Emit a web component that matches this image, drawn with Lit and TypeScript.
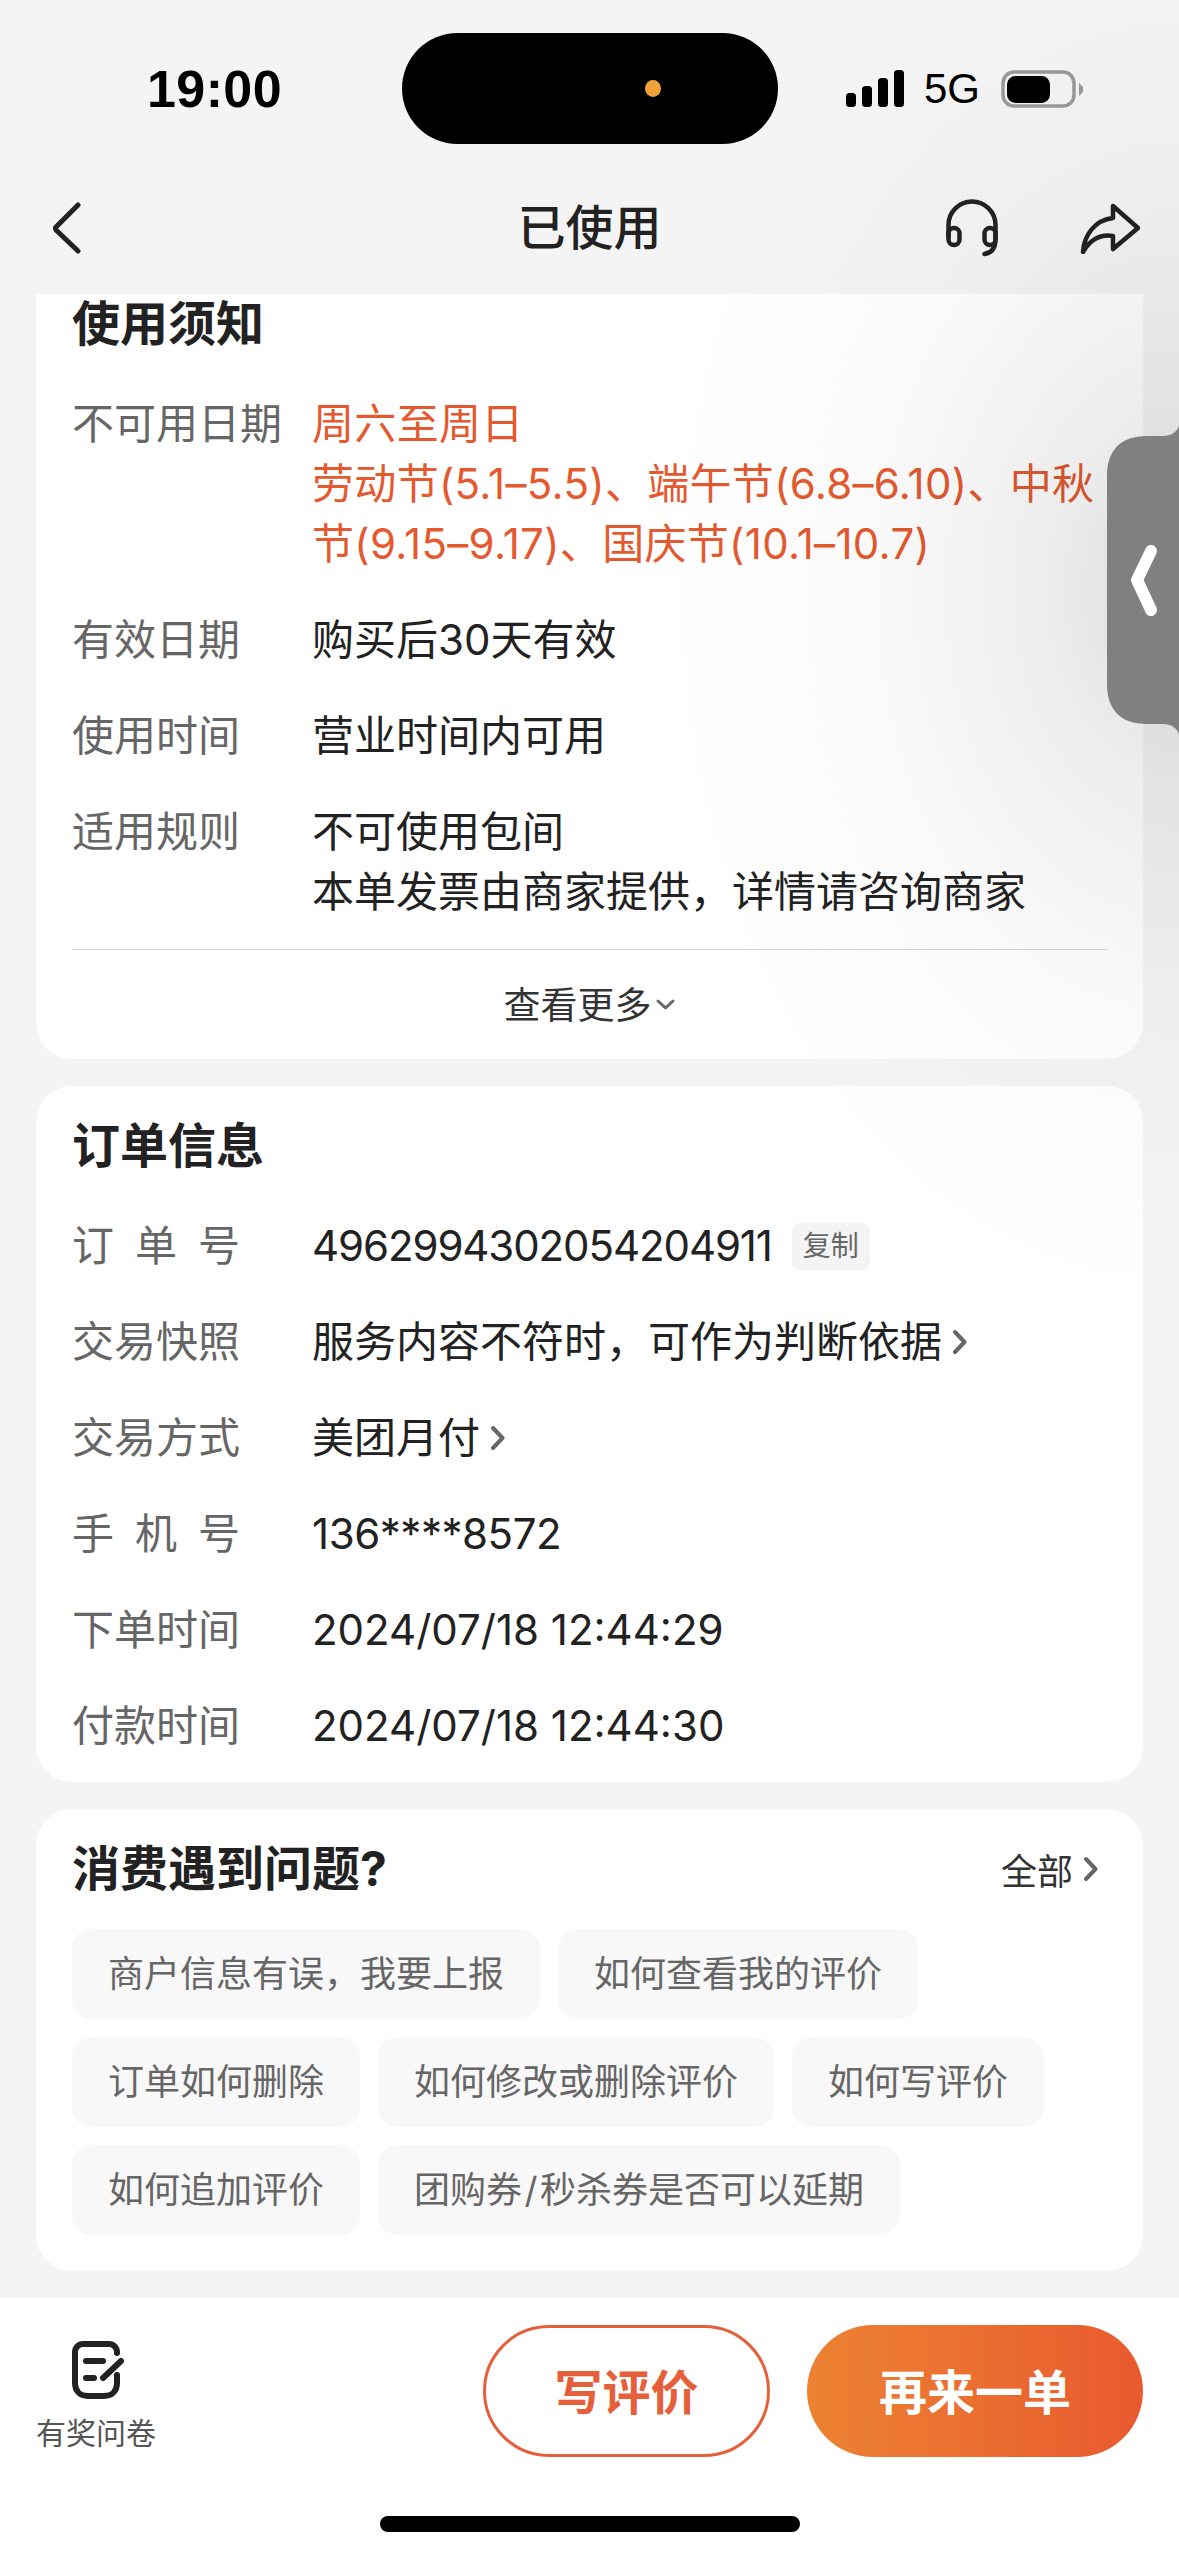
import { LitElement, html, css, svg } from 'lit';
import { customElement } from 'lit/decorators.js';

const chevron = (cls = 'chev') => html`
  <svg class=${cls} viewBox="0 0 15 26" fill="none" stroke="currentColor" stroke-width="4" stroke-linecap="round" stroke-linejoin="round">
    <path d="M3 3 L12.5 13 L3 23"></path>
  </svg>
`;

const label = (text: string, spread = false) =>
  html`<div class="label ${spread ? 'spread' : ''}">${text}</div>`;

const headset = svg`
  <path d="M2.5 38 V26 a23.5 23.5 0 0 1 47 0 V40 c0 9 -4 14 -11 15"></path>
  <rect x="2.5" y="29" width="11" height="17" rx="5.5"></rect>
  <rect x="38.5" y="29" width="11" height="17" rx="5.5"></rect>
`;

const chips = [
  ['商户信息有误，我要上报', '如何查看我的评价'],
  ['订单如何删除', '如何修改或删除评价', '如何写评价'],
  ['如何追加评价', '团购券/秒杀券是否可以延期'],
];

// the slash sits a little wider in the reference
const chipText = (c: string) => {
  const parts = c.split('/');
  return parts.length > 1 ? html`${parts[0]}<span class="slash">/</span>${parts[1]}` : c;
};

@customElement('app-root')
export class AppRoot extends LitElement {
  static override styles = css`
    :host {
      display: block;
      width: 1179px;
      height: 2556px;
      font-family: Inter, 'Noto Sans CJK SC', sans-serif;
      color: #222;
    }
    .page {
      position: relative;
      display: flex;
      flex-direction: column;
      height: 2556px;
      overflow: hidden;
      background: #f4f4f4;
    }
    .shade {
      position: absolute;
      inset: 0;
      pointer-events: none;
      background: radial-gradient(
        ellipse 520px 720px at 1179px 590px,
        rgba(0, 0, 0, 0.14),
        rgba(0, 0, 0, 0.12) 8%,
        rgba(0, 0, 0, 0.07) 26%,
        rgba(0, 0, 0, 0.02) 60%,
        rgba(0, 0, 0, 0) 100%
      );
    }
    .head {
      height: 294px;
      flex: none;
    }
    .status {
      display: flex;
      align-items: center;
      height: 111px;
      padding-top: 33px;
    }
    .time {
      width: 402px;
      padding-left: 147px;
      box-sizing: border-box;
      font: 600 52px 'Liberation Sans', sans-serif;
      letter-spacing: 0.4px;
      color: #000;
      flex: none;
    }
    .island {
      display: flex;
      align-items: center;
      justify-content: flex-end;
      width: 376px;
      height: 111px;
      padding-right: 117px;
      box-sizing: border-box;
      border-radius: 56px;
      background: #000;
      flex: none;
    }
    .dot {
      width: 16px;
      height: 17px;
      border-radius: 50%;
      background: #f0a13a;
    }
    .sys {
      display: flex;
      align-items: center;
      margin-left: 68px;
    }
    .signal {
      width: 59px;
      height: 37px;
    }
    .net {
      margin: 0 21px 0 19px;
      font: 400 42px 'Liberation Sans', sans-serif;
      color: #000;
    }
    .battery {
      width: 83px;
      height: 38px;
    }
    .nav {
      display: grid;
      grid-template-columns: 1fr auto 1fr;
      align-items: center;
      height: 96px;
      margin-top: 36px;
      padding: 0 39px;
    }
    .back {
      width: 30px;
      height: 52px;
      margin-left: 13px;
      color: #222;
    }
    .title {
      font-size: 48px;
      font-weight: 500;
      line-height: 60px;
    }
    .actions {
      display: flex;
      align-items: center;
      justify-content: flex-end;
      gap: 82px;
    }
    .actions svg {
      fill: none;
      stroke: #222;
      stroke-width: 4.5;
      stroke-linecap: round;
      stroke-linejoin: round;
    }
    .main {
      flex: 1;
      min-height: 0;
      display: flex;
      flex-direction: column;
      gap: 27px;
      padding: 0 36px;
    }
    .card {
      flex: none;
      padding: 30px 36px 26px;
      background: #fff;
      border-radius: 36px;
    }
    .card.cut {
      padding-top: 0;
      padding-bottom: 0;
      border-radius: 0 0 36px 36px;
    }
    h2 {
      margin: 0 0 40px;
      font-size: 48px;
      font-weight: 700;
      line-height: 60px;
      color: #222;
    }
    .rows {
      display: flex;
      flex-direction: column;
      gap: 36px;
    }
    .row {
      display: flex;
      font-size: 42px;
      line-height: 60px;
    }
    .label {
      width: 240px;
      flex: none;
      color: #666;
    }
    .label.spread {
      box-sizing: border-box;
      padding-right: 72px;
      text-align: justify;
      text-align-last: justify;
    }
    .value {
      display: flex;
      align-items: center;
      min-width: 0;
      white-space: nowrap;
    }
    .value.id {
      letter-spacing: -1.1px;
    }
    .value.phone {
      letter-spacing: -0.45px;
    }
    .stack {
      white-space: nowrap;
    }
    .warn {
      color: #e4592f;
      letter-spacing: 0.32px;
    }
    .chev {
      width: 15px;
      height: 26px;
      margin-left: 10px;
      color: #666;
      flex: none;
    }
    .tag {
      margin-left: 20px;
      padding: 0 11px;
      font-size: 28px;
      line-height: 47px;
      letter-spacing: 0;
      color: #666;
      background: #f4f4f4;
      border-radius: 8px;
    }
    .more {
      display: flex;
      align-items: center;
      justify-content: center;
      height: 110px;
      padding-bottom: 4px;
      box-sizing: border-box;
      margin-top: 27px;
      border-top: 1px solid #d4d4d4;
      font-size: 37px;
      color: #333;
    }
    .more svg {
      width: 21px;
      height: 13px;
      margin: 4px 0 0 3px;
      color: #666;
    }
    .bar {
      display: flex;
      align-items: center;
      justify-content: space-between;
      margin-bottom: 30px;
    }
    .bar h2 {
      margin: 0;
    }
    .all {
      display: flex;
      align-items: center;
      padding-right: 9px;
      font-size: 36px;
      color: #333;
    }
    .chips {
      display: flex;
      flex-direction: column;
      gap: 18px;
      padding-bottom: 10px;
    }
    .chip-row {
      display: flex;
      gap: 18px;
    }
    .chip {
      padding: 0 36px;
      font-size: 36px;
      line-height: 90px;
      color: #666;
      background: #f8f8f8;
      border-radius: 20px;
    }
    .slash {
      margin: 0 2.5px;
    }
    .foot {
      position: relative;
      flex: none;
      height: 258px;
      box-sizing: border-box;
      padding: 27px 36px 0;
      background: #fff;
    }
    .foot-row {
      display: flex;
      align-items: flex-start;
    }
    .survey {
      display: flex;
      flex-direction: column;
      align-items: center;
      gap: 14px;
      margin-right: auto;
      padding-top: 16px;
      font-size: 30px;
      line-height: 40px;
      color: #555;
    }
    .survey svg {
      width: 54px;
      height: 58px;
      margin-left: 4px;
      fill: none;
      stroke: #222;
      stroke-width: 6;
      stroke-linecap: round;
    }
    .btn {
      display: flex;
      align-items: center;
      justify-content: center;
      box-sizing: border-box;
      height: 132px;
      padding-bottom: 5px;
      border-radius: 66px;
      font-size: 48px;
      font-weight: 700;
    }
    .btn.line {
      width: 287px;
      margin-right: 37px;
      color: #e5603a;
      border: 3px solid #e5603a;
    }
    .btn.solid {
      width: 336px;
      color: #fff;
      background: linear-gradient(90deg, #ec8232, #e95a2f);
    }
    .home {
      width: 420px;
      height: 16px;
      margin: 59px auto 0;
      border-radius: 8px;
      background: #000;
    }
    .handle {
      position: absolute;
      top: 426px;
      right: 0;
      width: 72px;
      height: 308px;
    }
  `;

  override render() {
    return html`
      <div class="page">
        <div class="head">
          <div class="status">
            <div class="time">19:00</div>
            <div class="island"><div class="dot"></div></div>
            <div class="sys">
              <svg class="signal" viewBox="0 0 59 37" fill="#000">
                <rect x="0" y="23" width="10" height="14" rx="3.5"></rect>
                <rect x="16" y="16" width="10" height="21" rx="3.5"></rect>
                <rect x="32" y="8" width="10" height="29" rx="3.5"></rect>
                <rect x="48" y="0" width="10" height="37" rx="3.5"></rect>
              </svg>
              <div class="net">5G</div>
              <svg class="battery" viewBox="0 0 83 38">
                <rect x="2" y="2" width="71" height="34" rx="11" fill="none" stroke="#999" stroke-width="3.5"></rect>
                <rect x="6" y="6" width="43" height="27" rx="8.5" fill="#000"></rect>
                <path d="M78 13 L82 17 V22 L78 26 Z" fill="#999"></path>
              </svg>
            </div>
          </div>
          <div class="nav">
            <svg class="back" viewBox="0 0 30 52" fill="none" stroke="currentColor" stroke-width="5" stroke-linecap="round" stroke-linejoin="round">
              <path d="M26 3 L4 25 Q3 26 4 28 L26 49"></path>
            </svg>
            <div class="title">已使用</div>
            <div class="actions">
              <svg width="52" height="58" viewBox="0 0 52 58">${headset}</svg>
              <svg width="60" height="51" viewBox="0 0 60 51">
                <path d="M3 49 C4 32 15 17 33 15 V3 L58 25 L33 46 V33 C20 31 10 37 3 49 Z"></path>
              </svg>
            </div>
          </div>
        </div>

        <div class="main">
          <section class="card cut">
            <h2>使用须知</h2>
            <div class="rows">
              <div class="row">
                ${label('不可用日期')}
                <div class="stack warn">
                  周六至周日<br />
                  劳动节(5.1–5.5)、端午节(6.8–6.10)、中秋<br />
                  节(9.15–9.17)、国庆节(10.1–10.7)
                </div>
              </div>
              <div class="row">${label('有效日期')}<div class="value">购买后30天有效</div></div>
              <div class="row">${label('使用时间')}<div class="value">营业时间内可用</div></div>
              <div class="row">
                ${label('适用规则')}
                <div class="stack">不可使用包间<br />本单发票由商家提供，详情请咨询商家</div>
              </div>
            </div>
            <div class="more">
              查看更多
              <svg viewBox="0 0 21 13" fill="none" stroke="currentColor" stroke-width="3" stroke-linecap="round" stroke-linejoin="round">
                <path d="M3 3 L10.5 10 L18 3"></path>
              </svg>
            </div>
          </section>

          <section class="card">
            <h2>订单信息</h2>
            <div class="rows">
              <div class="row">
                ${label('订 单 号', true)}
                <div class="value id">4962994302054204911<span class="tag">复制</span></div>
              </div>
              <div class="row">
                ${label('交易快照')}
                <div class="value">服务内容不符时，可作为判断依据${chevron()}</div>
              </div>
              <div class="row">
                ${label('交易方式')}
                <div class="value">美团月付${chevron()}</div>
              </div>
              <div class="row">${label('手 机 号', true)}<div class="value phone">136****8572</div></div>
              <div class="row">${label('下单时间')}<div class="value">2024/07/18 12:44:29</div></div>
              <div class="row">${label('付款时间')}<div class="value">2024/07/18 12:44:30</div></div>
            </div>
          </section>

          <section class="card">
            <div class="bar">
              <h2>消费遇到问题?</h2>
              <div class="all">全部${chevron()}</div>
            </div>
            <div class="chips">
              ${chips.map(
                (row) => html`<div class="chip-row">${row.map((c) => html`<div class="chip">${chipText(c)}</div>`)}</div>`
              )}
            </div>
          </section>
        </div>

        <div class="foot">
          <div class="foot-row">
            <div class="survey">
              <svg viewBox="0 0 54 58">
                <path d="M46 12 V11 a8 8 0 0 0 -8 -8 H12 a8 8 0 0 0 -8 8 V42 C4 50 9 55 17 55 H33 C41 55 46 50 46 42 V34"></path>
                <path d="M15 20 H32 M15 37 H23 M32 37 L50 20"></path>
              </svg>
              有奖问卷
            </div>
            <div class="btn line">写评价</div>
            <div class="btn solid">再来一单</div>
          </div>
          <div class="home"></div>
        </div>

        <div class="shade"></div>
        <svg class="handle" viewBox="0 0 72 308">
          <path d="M72 0 C70 6 64 10 56 10 H40 C14 10 0 24 0 50 V258 C0 284 14 298 40 298 H56 C64 298 70 302 72 308 Z" fill="#808080"></path>
          <path d="M44 125 L30 154 L44 184" fill="none" stroke="#fff" stroke-width="12" stroke-linecap="round" stroke-linejoin="round"></path>
        </svg>
      </div>
    `;
  }
}
